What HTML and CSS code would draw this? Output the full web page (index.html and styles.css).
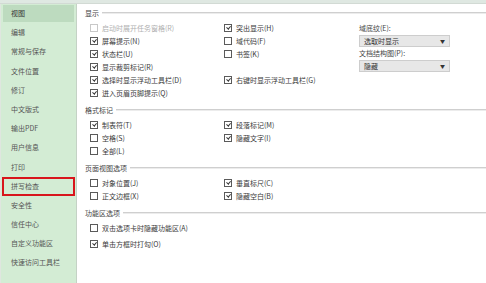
FILE: index.html
```html
<!DOCTYPE html>
<html lang="zh-CN">
<head>
    <meta charset="UTF-8">
    <title>选项 - 视图</title>
    <link rel="stylesheet" href="styles.css">
</head>
<body>
    <div class="topbar"></div>

    <div class="options-window">
        <!-- 左侧分类 -->
        <ul class="sidebar">
            <li class="nav-item active">视图</li>
            <li class="nav-item">编辑</li>
            <li class="nav-item">常规与保存</li>
            <li class="nav-item">文件位置</li>
            <li class="nav-item">修订</li>
            <li class="nav-item">中文版式</li>
            <li class="nav-item">输出PDF</li>
            <li class="nav-item">用户信息</li>
            <li class="nav-item">打印</li>
            <li class="nav-item marked">拼写检查</li>
            <li class="nav-item">安全性</li>
            <li class="nav-item">信任中心</li>
            <li class="nav-item">自定义功能区</li>
            <li class="nav-item">快速访问工具栏</li>
        </ul>

        <div class="options-panel">
            <!-- 显示 -->
            <div class="group-title">显示</div>
            <div class="option-grid">
                <label class="option disabled"><span class="cb"></span>启动时展开任务窗格(R)</label>
                <label class="option"><span class="cb checked"></span>突出显示(H)</label>
                <div class="side-col">
                    <div class="field-label">域底纹(E):</div>
                    <div class="dropdown">选取时显示<span class="arrow">▼</span></div>
                    <div class="field-label">文档结构图(P):</div>
                    <div class="dropdown">隐藏<span class="arrow">▼</span></div>
                </div>
                <label class="option"><span class="cb checked"></span>屏幕提示(N)</label>
                <label class="option"><span class="cb"></span>域代码(F)</label>
                <label class="option"><span class="cb checked"></span>状态栏(U)</label>
                <label class="option"><span class="cb"></span>书签(K)</label>
                <label class="option"><span class="cb checked"></span>显示裁剪标记(R)</label>
                <span></span>
                <label class="option"><span class="cb checked"></span>选择时显示浮动工具栏(D)</label>
                <label class="option"><span class="cb checked"></span>右键时显示浮动工具栏(G)</label>
                <label class="option"><span class="cb checked"></span>进入页眉页脚提示(Q)</label>
                <span></span>
            </div>

            <!-- 格式标记 -->
            <div class="group-title">格式标记</div>
            <div class="option-grid">
                <label class="option"><span class="cb checked"></span>制表符(T)</label>
                <label class="option"><span class="cb checked"></span>段落标记(M)</label>
                <span></span>
                <label class="option"><span class="cb"></span>空格(S)</label>
                <label class="option"><span class="cb checked"></span>隐藏文字(I)</label>
                <span></span>
                <label class="option"><span class="cb"></span>全部(L)</label>
            </div>

            <!-- 页面视图选项 -->
            <div class="group-title">页面视图选项</div>
            <div class="option-grid">
                <label class="option"><span class="cb"></span>对象位置(J)</label>
                <label class="option"><span class="cb checked"></span>垂直标尺(C)</label>
                <span></span>
                <label class="option"><span class="cb"></span>正文边框(X)</label>
                <label class="option"><span class="cb checked"></span>隐藏空白(B)</label>
            </div>

            <!-- 功能区选项 -->
            <div class="group-title">功能区选项</div>
            <div class="option-grid loose">
                <label class="option wide"><span class="cb"></span>双击选项卡时隐藏功能区(A)</label>
                <label class="option wide"><span class="cb checked"></span>单击方框时打勾(O)</label>
            </div>
        </div>
    </div>
</body>
</html>
```

FILE: styles.css
```css
body {
    margin: 0;
    width: 486px;
    height: 283px;
    overflow: hidden;
    background-color: #fff;
    font-family: "Noto Sans CJK SC", "Liberation Sans", sans-serif;
    font-size: 7px;
    color: #3a3a3a;
}

.topbar {
    height: 3px;
    background-color: #dfe8e2;
    border-bottom: 1px solid #d2dad4;
}

.options-window {
    display: flex;
    height: 279px;
}

/* sidebar */

.sidebar {
    list-style: none;
    margin: 0;
    padding: 1px 2px 0 2px;
    width: 71px;
    background-color: #d3ecd4;
    border-left: 1px solid #dfe6df;
    border-right: 1px solid #c4d2c5;
}

.nav-item {
    height: 17px;
    line-height: 17px;
    margin-bottom: 2.2px;
    padding-left: 8px;
    color: #555;
}

.nav-item.active {
    background-color: #bddbbf;
    color: #333;
}

.nav-item.marked {
    outline: 2px solid #d8151c;
    outline-offset: -1px;
}

/* options */

.options-panel {
    flex: 1;
    padding: 2.5px 0 0 8px;
}

.group-title {
    display: flex;
    align-items: center;
    height: 13px;
    margin-top: 4px;
    color: #444;
}

.group-title:first-child {
    margin-top: 0;
}

.group-title::after {
    content: "";
    flex: 1;
    margin-left: 3px;
    border-top: 1px solid #cfcfcf;
    border-bottom: 1px solid #ececec;
}

.option-grid {
    display: grid;
    grid-template-columns: 134px 135px 1fr;
    grid-auto-rows: 13px;
    margin: 2px 0 0 5px;
}

.option-grid.loose {
    row-gap: 3px;
}

.option {
    display: flex;
    align-items: center;
    gap: 4px;
    white-space: nowrap;
}

.option.wide {
    grid-column: 1 / 3;
}

.option.disabled {
    color: #b0b0b0;
}

.cb {
    position: relative;
    flex: none;
    width: 6px;
    height: 6px;
    border: 1px solid #5a5a5a;
    background-color: #fff;
}

.option.disabled .cb {
    border-color: #c8c8c8;
}

.cb.checked::after {
    content: "";
    position: absolute;
    left: 1.6px;
    top: 0;
    width: 1.6px;
    height: 3.4px;
    border-right: 1px solid #333;
    border-bottom: 1px solid #333;
    transform: rotate(40deg);
}

.side-col {
    grid-row: span 6;
    width: 91px;
}

.field-label {
    height: 13px;
    line-height: 13px;
    color: #444;
}

.dropdown {
    display: flex;
    align-items: center;
    justify-content: space-between;
    box-sizing: border-box;
    height: 12px;
    padding: 0 4px;
    background-color: #e7e7e7;
    border: 1px solid #cdcdcd;
    color: #333;
}

.arrow {
    font-size: 5px;
    color: #333;
}
```
